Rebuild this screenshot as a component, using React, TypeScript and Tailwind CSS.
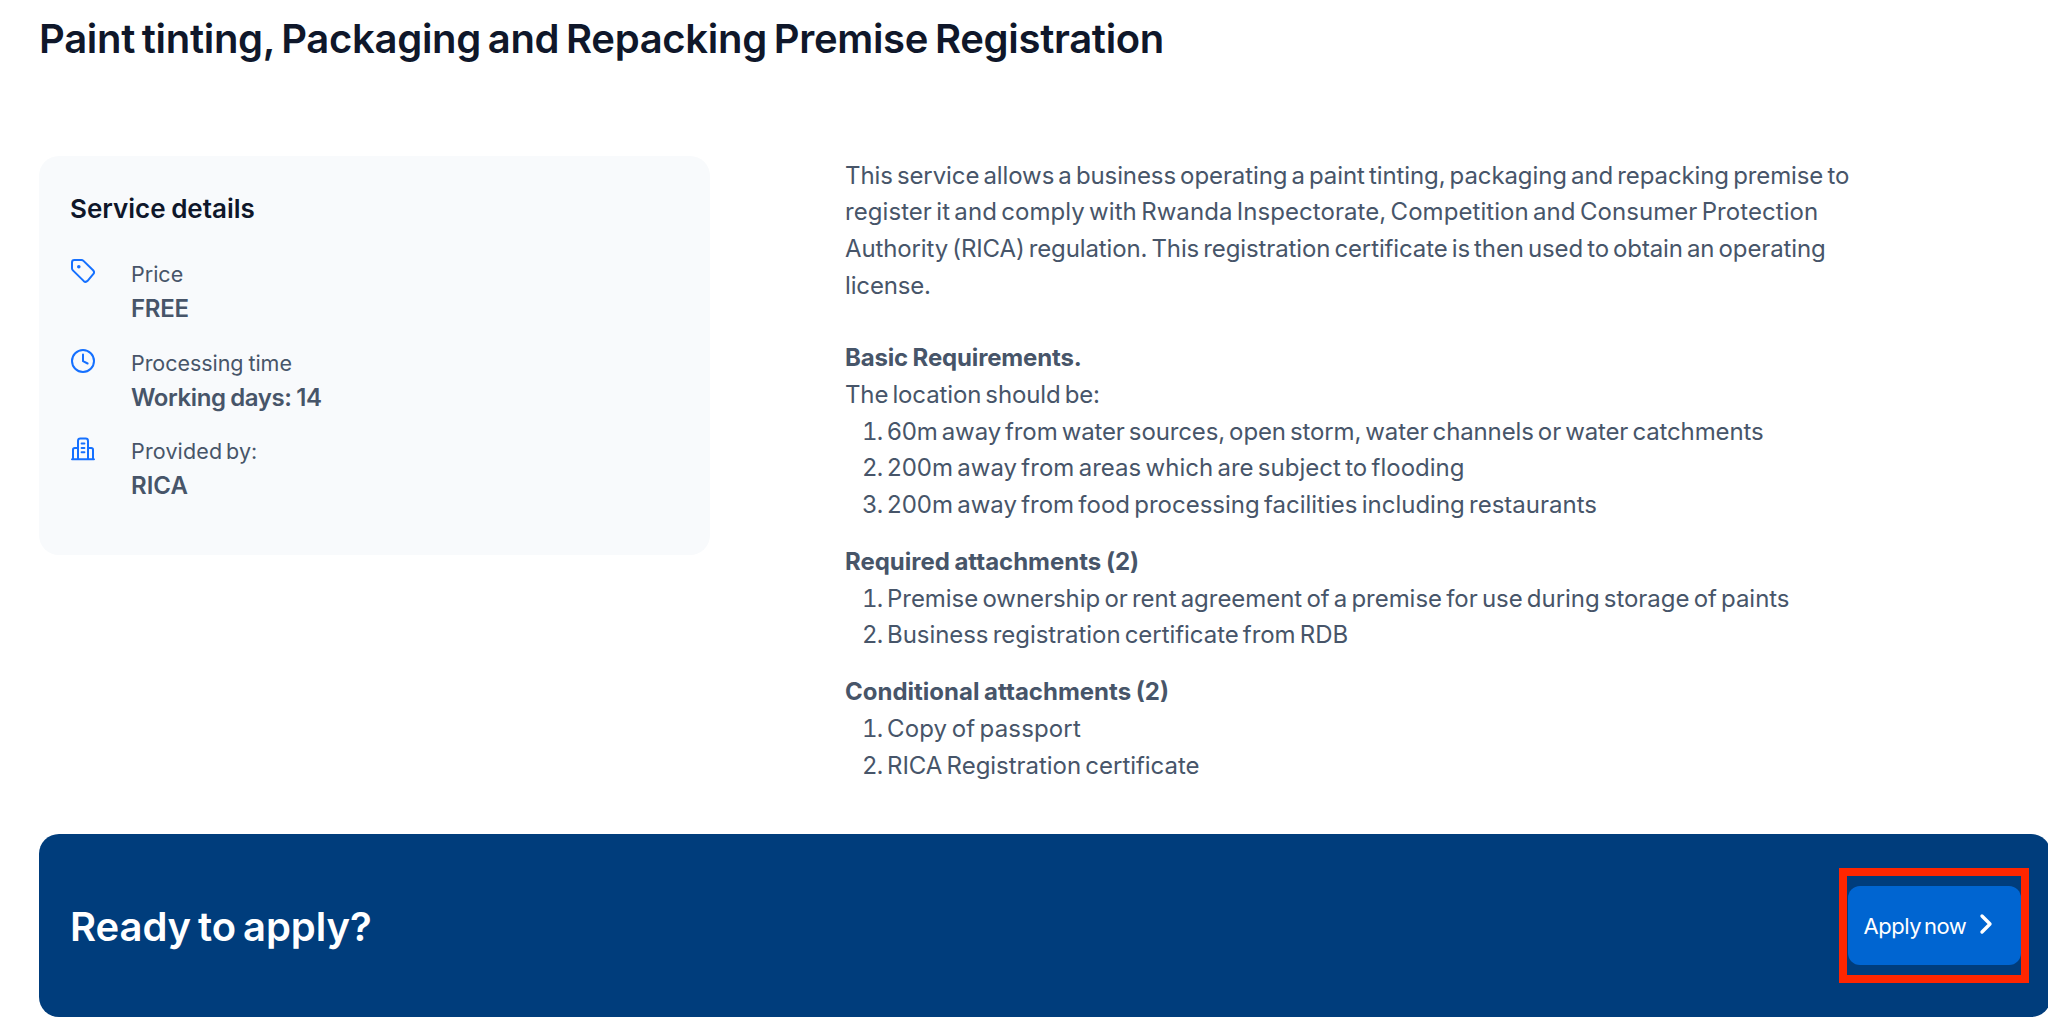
import type { ReactNode } from "react";

/* ========================
   Types
======================== */
type Line = {
  text: string;
  className?: string;
};

type Section = {
  title: Line;
  intro?: Line;
  items: Line[];
};

type Detail = {
  label: Line;
  value: Line;
  icon: ReactNode;
};

/* ========================
   Icons
======================== */
function TagIcon() {
  return (
    <svg viewBox="0 0 24 24" fill="none" className="h-6 w-6" stroke="currentColor" strokeWidth="2" strokeLinejoin="round">
      <path d="M1 3.4Q1 1 3.4 1H10.4Q11.6 1 12.5 1.9L22.1 11.2Q24 13.2 22.2 15.2L16.6 21.8Q14.7 23.8 12.6 21.9L1.9 11.4Q1 10.5 1 9.3Z" />
      <circle cx="7.8" cy="7.7" r="1.8" fill="currentColor" stroke="none" />
    </svg>
  );
}

function ClockIcon() {
  return (
    <svg viewBox="0 0 24 24" fill="none" className="mt-[1.5px] h-6 w-6" stroke="currentColor" strokeWidth="2" strokeLinecap="round" strokeLinejoin="round">
      <circle cx="12" cy="12" r="11" />
      <path d="M12 5.6V12.2L16.6 14.5" />
    </svg>
  );
}

function BuildingIcon() {
  return (
    <svg viewBox="0 0 24 24" fill="none" className="mt-px h-6 w-6" stroke="currentColor" strokeWidth="2" strokeLinecap="round" strokeLinejoin="round">
      <path d="M1 22.3H23M7 22V4Q7 1.6 9.4 1.6H14.6Q17 1.6 17 4V22M2 22V12.8Q2 11 3.8 11H7M17 11H20.2Q22 11 22 12.8V22" />
      <path d="M10.6 6.5H13.4M10.6 10.9H13.4M10.6 15.3H13.4" />
    </svg>
  );
}

/* ========================
   Content
======================== */
const DETAILS: Detail[] = [
  { label: { text: "Price" }, value: { text: "FREE", className: "tracking-[-0.3px]" }, icon: <TagIcon /> },
  {
    label: { text: "Processing time", className: "tracking-[-0.05px] [word-spacing:-1px]" },
    value: { text: "Working days: 14", className: "tracking-[-0.4px] [word-spacing:-1px]" },
    icon: <ClockIcon />,
  },
  { label: { text: "Provided by:", className: "tracking-[0.15px]" }, value: { text: "RICA" }, icon: <BuildingIcon /> },
];

const DESCRIPTION: Line[] = [
  {
    text: "This service allows a business operating a paint tinting, packaging and repacking premise to",
    className: "tracking-[-0.1px]",
  },
  {
    text: "register it and comply with Rwanda Inspectorate, Competition and Consumer Protection",
    className: "tracking-[0.06px]",
  },
  {
    text: "Authority (RICA) regulation. This registration certificate is then used to obtain an operating",
    className: "tracking-[-0.12px]",
  },
  { text: "license.", className: "tracking-[-0.15px]" },
];

const SECTIONS: Section[] = [
  {
    title: { text: "Basic Requirements.", className: "tracking-[-0.16px] [word-spacing:-1px]" },
    intro: { text: "The location should be:", className: "tracking-[-0.13px]" },
    items: [
      {
        text: "60m away from water sources, open storm, water channels or water catchments",
        className: "tracking-[-0.13px]",
      },
      { text: "200m away from areas which are subject to flooding", className: "tracking-[0.02px]" },
      { text: "200m away from food processing facilities including restaurants" },
    ],
  },
  {
    title: { text: "Required attachments (2)", className: "tracking-[-0.02px] [word-spacing:-1px]" },
    items: [
      {
        text: "Premise ownership or rent agreement of a premise for use during storage of paints",
        className: "tracking-[-0.04px]",
      },
      { text: "Business registration certificate from RDB", className: "tracking-[-0.05px]" },
    ],
  },
  {
    title: { text: "Conditional attachments (2)", className: "[word-spacing:-1px]" },
    items: [
      { text: "Copy of passport", className: "tracking-[0.15px]" },
      { text: "RICA Registration certificate", className: "tracking-[-0.03px]" },
    ],
  },
];

/* ========================
   Component
======================== */
export default function App() {
  return (
    <main className="h-[1018px] w-full overflow-hidden bg-white pl-[39px] font-['Inter',sans-serif] [word-spacing:-2.5px] text-[#475569]">
      <h1 className="h-[156px] pt-[14px] text-[40px] leading-[50px] font-semibold tracking-[-0.3px] [word-spacing:-3px] whitespace-nowrap text-[#0f172a]">
        Paint tinting, Packaging and Repacking Premise Registration
      </h1>

      <div className="flex h-[678px] items-start">
        <aside className="h-[399px] w-[670.5px] rounded-[20px] bg-[#f8fafc] pt-9 pl-8">
          <h2 className="-ml-px text-[26px] leading-[34px] font-semibold [word-spacing:-1px] whitespace-nowrap text-[#0f172a]">
            Service details
          </h2>
          <dl className="mt-[31px] flex flex-col gap-[18.5px]">
            {DETAILS.map((d) => (
              <div key={d.label.text} className="flex h-[70px]">
                <div className="w-[60px] pt-0.5 text-[#1570ff]">{d.icon}</div>
                <div className="whitespace-nowrap">
                  <dt className="-mt-px h-9 text-[21.5px] leading-9">
                    <span className={d.label.className}>{d.label.text}</span>
                  </dt>
                  <dd className="text-[24px] leading-[34px] font-semibold">
                    <span className={d.value.className}>{d.value.text}</span>
                  </dd>
                </div>
              </div>
            ))}
          </dl>
        </aside>

        <section className="ml-[135.5px] pt-[1.5px] text-[24px] leading-[36.67px] whitespace-nowrap">
          <p>
            {DESCRIPTION.map((l) => (
              <span key={l.text} className="block">
                <span className={l.className}>{l.text}</span>
              </span>
            ))}
          </p>
          <div className="mt-9 flex flex-col gap-[20.4px]">
            {SECTIONS.map((s) => (
              <div key={s.title.text}>
                <h3 className="font-bold">
                  <span className={s.title.className}>{s.title.text}</span>
                </h3>
                {s.intro && (
                  <p>
                    <span className={s.intro.className}>{s.intro.text}</span>
                  </p>
                )}
                <ol>
                  {s.items.map((item, i) => (
                    <li key={item.text} className="flex pl-[17px]">
                      <span className="w-[25px] tracking-[-0.8px] tabular-nums">{i + 1}.</span>
                      <span className={item.className}>{item.text}</span>
                    </li>
                  ))}
                </ol>
              </div>
            ))}
          </div>
        </section>
      </div>

      <div className="flex h-[182.5px] w-[2012px] items-center justify-between rounded-[20px] bg-[#003d7c] pr-[22px] pl-[31px] text-white">
        <h2 className="pt-[3px] text-[40px] leading-[50px] font-semibold tracking-[-0.07px] [word-spacing:-3px] whitespace-nowrap">
          Ready to apply?
        </h2>
        <div className="flex h-[115px] w-[190px] items-center justify-center border-8 border-[#ff2600]">
          <button className="flex h-[79px] w-[173px] items-center rounded-xl bg-[#0065d1] pl-4 text-[22px] whitespace-nowrap">
            <span className="w-[114px] pt-0.5 text-left tracking-[-0.45px] [word-spacing:-3px]">Apply now</span>
            <svg viewBox="0 0 16 24" fill="none" className="mb-[3px] h-6 w-4" stroke="currentColor" strokeWidth="3.4" strokeLinecap="round" strokeLinejoin="round">
              <path d="M4 4L12 12L4 20" />
            </svg>
          </button>
        </div>
      </div>
    </main>
  );
}
